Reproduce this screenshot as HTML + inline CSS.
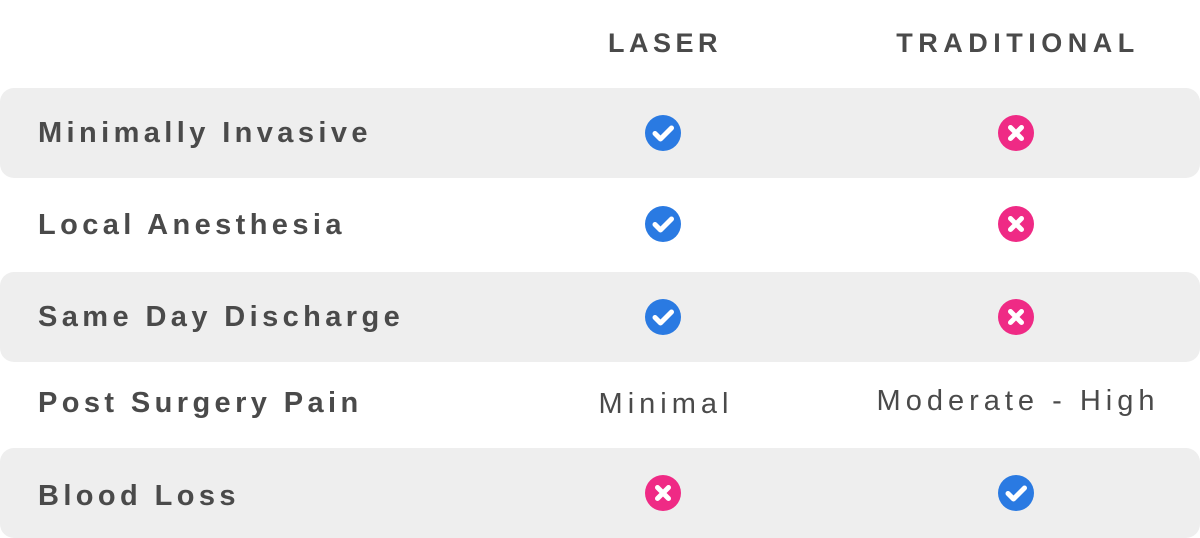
<!DOCTYPE html>
<html><head><style>
body{margin:0;width:1200px;height:538px;background:#fff;position:relative;overflow:hidden;font-family:"Liberation Sans",sans-serif;color:#4a4a4a}
.h{position:absolute;top:28px;font-weight:bold;font-size:27px;letter-spacing:5.5px;transform:translateX(-50%);white-space:nowrap}
.row{position:absolute;left:0;width:1200px;height:90px;border-radius:14px}
.g{background:#eeeeee}
.lab{position:absolute;left:38px;font-weight:bold;font-size:29px;letter-spacing:4.4px;white-space:nowrap;line-height:30px}
.ic{position:absolute;width:36px;height:36px;transform:translate(-50%,-50%)}
.t{position:absolute;font-size:29px;letter-spacing:5px;transform:translateX(-50%);white-space:nowrap;line-height:30px}
</style></head><body>
<div class="h" style="left:665px;letter-spacing:4.5px">LASER</div>
<div class="h" style="left:1018px">TRADITIONAL</div>
<div class="row g" style="top:88px"></div>
<div class="row g" style="top:272px"></div>
<div class="row g" style="top:448px"></div>
<div class="lab" style="top:118px">Minimally Invasive</div>
<div class="lab" style="top:210px">Local Anesthesia</div>
<div class="lab" style="top:302px">Same Day Discharge</div>
<div class="lab" style="top:388px">Post Surgery Pain</div>
<div class="lab" style="top:481px">Blood Loss</div>
<div class="t" style="left:666px;top:389px">Minimal</div>
<div class="t" style="left:1018px;top:386px">Moderate - High</div>
<svg width="0" height="0" style="position:absolute"><defs>
<g id="ck"><circle cx="18" cy="18" r="18" fill="#2a7ae2"/><path d="M10 18.5l5.5 5.5L26.5 13" stroke="#fff" stroke-width="5" fill="none" stroke-linecap="round" stroke-linejoin="round"/></g>
<g id="x"><circle cx="18" cy="18" r="18" fill="#ef2a85"/><path d="M12.5 12.5l11 11M23.5 12.5l-11 11" stroke="#fff" stroke-width="5" stroke-linecap="round"/></g>
</defs></svg>
<svg class="ic" style="left:663px;top:133px" viewBox="0 0 36 36"><use href="#ck"/></svg>
<svg class="ic" style="left:1016px;top:133px" viewBox="0 0 36 36"><use href="#x"/></svg>
<svg class="ic" style="left:663px;top:224px" viewBox="0 0 36 36"><use href="#ck"/></svg>
<svg class="ic" style="left:1016px;top:224px" viewBox="0 0 36 36"><use href="#x"/></svg>
<svg class="ic" style="left:663px;top:317px" viewBox="0 0 36 36"><use href="#ck"/></svg>
<svg class="ic" style="left:1016px;top:317px" viewBox="0 0 36 36"><use href="#x"/></svg>
<svg class="ic" style="left:663px;top:493px" viewBox="0 0 36 36"><use href="#x"/></svg>
<svg class="ic" style="left:1016px;top:493px" viewBox="0 0 36 36"><use href="#ck"/></svg>
</body></html>
